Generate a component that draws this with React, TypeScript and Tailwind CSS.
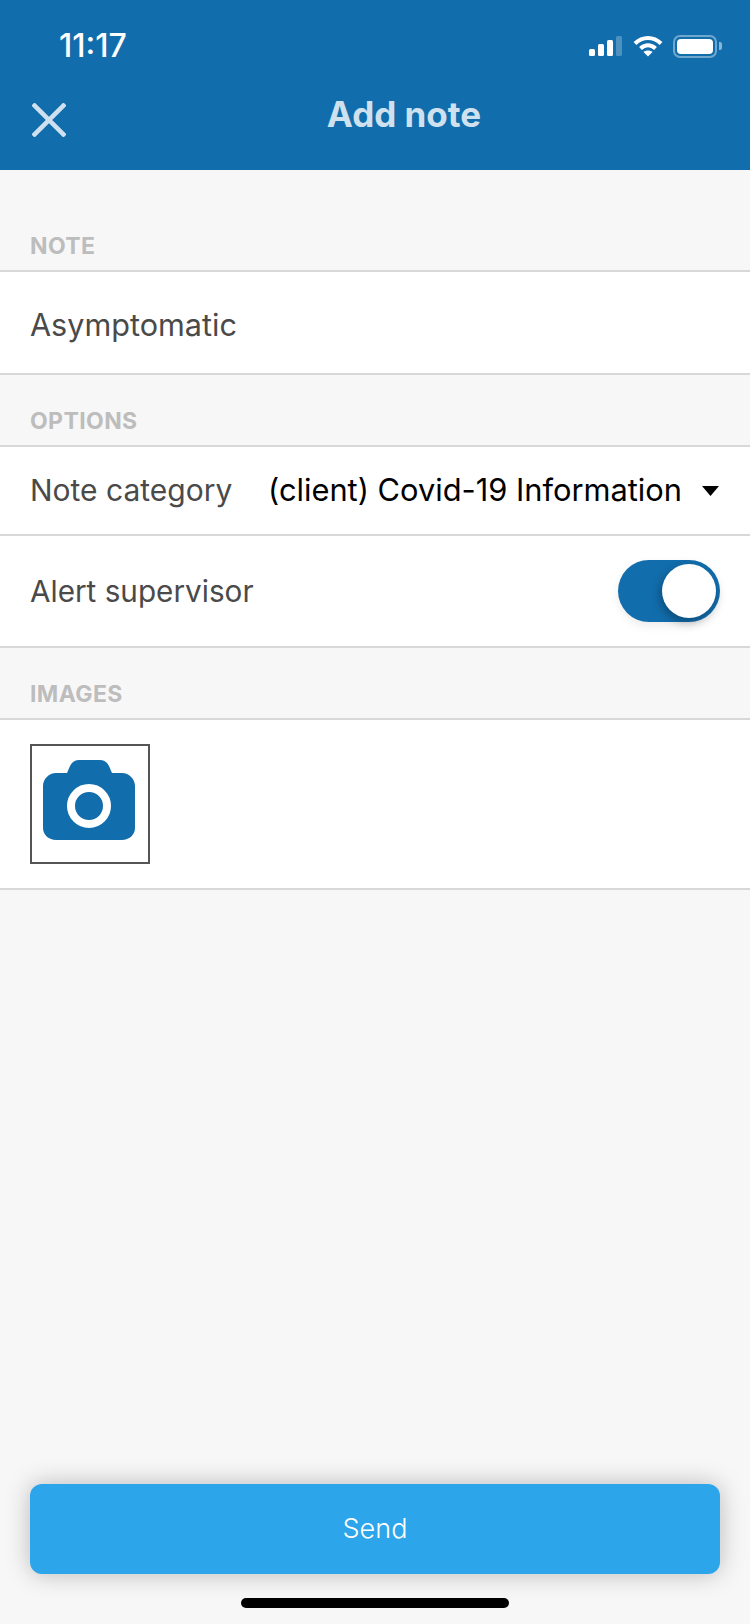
import React from 'react';

const SectionLabel = ({ title, className }: { title: string; className: string }) => (
  <div className={`flex items-end px-[30px] pb-[11px] text-[23px] leading-[26px] font-bold tracking-[0.4px] text-[#bdbdbd] ${className}`}>{title}</div>
);

const StatusIcons = () => (
  <div className="flex items-center">
    <svg width="33" height="22" viewBox="0 0 33 22" fill="#fff">
      <rect x="0" y="14" width="6" height="7" rx="1.5" />
      <rect x="9" y="9" width="6" height="12" rx="1.5" />
      <rect x="18" y="5" width="6" height="16" rx="1.5" />
      <rect x="27" y="1" width="6" height="20" rx="1.5" fillOpacity="0.25" />
    </svg>
    <svg className="ml-[11px]" width="30" height="22" viewBox="0 0 30 22" fill="none" stroke="#fff" strokeWidth="4">
      <path d="M2 8.5C9.5 1 20.5 1 28 8.5" />
      <path d="M7.5 13.5C12 9.3 18 9.3 22.5 13.5" />
      <path d="M15 21.5L10.5 17C13 15 17 15 19.5 17Z" fill="#fff" stroke="none" />
    </svg>
    <div className="ml-[10px] flex items-center">
      <div className="flex h-[23px] w-[44px] rounded-[7px] border-2 border-white/40 p-[2px]">
        <div className="flex-1 rounded-[4px] bg-white" />
      </div>
      <div className="ml-[2px] h-[8px] w-[3px] rounded-r-[2px] bg-white/50" />
    </div>
  </div>
);

const Header = () => (
  <div className="relative h-[170px] bg-[#126dac]">
    <div className="flex items-center justify-between pt-[34px] pr-[28px] pl-[59px]">
      <span className="text-[32px] leading-[24px] font-medium text-white">11:17</span>
      <StatusIcons />
    </div>
    <div className="mt-[21px] flex h-[70px] items-center justify-center pl-[58px] text-[35px] leading-[40px] font-bold text-[#cfe1ee]">Add note</div>
    <svg className="absolute top-[103px] left-[32px]" width="34" height="34" viewBox="0 0 34 34" stroke="#cfe1ee" strokeWidth="4.5" fill="none">
      <path d="M1 1L33 33M33 1L1 33" />
    </svg>
  </div>
);

const App: React.FC = () => {
  return (
    <div className="relative flex h-[1624px] w-[750px] flex-col bg-[#f7f7f7] font-['Inter',sans-serif]">
      <Header />

      <SectionLabel title="NOTE" className="h-[100px]" />
      <div className="flex h-[105px] items-center border-y-2 border-[#d8d8d8] bg-white px-[30px] pt-[5px] text-[30.6px] text-[#4a4a4a]">Asymptomatic</div>

      <SectionLabel title="OPTIONS" className="h-[70px]" />
      <div className="flex h-[91px] items-center border-y-2 border-[#d8d8d8] bg-white pr-[31px] pl-[30px] text-[30px] text-[#4a4a4a]">
        <span>Note category</span>
        <span className="ml-auto text-[30.8px] text-black">(client) Covid-19 Information</span>
        <svg className="ml-[20px]" width="17" height="10" viewBox="0 0 17 10" fill="#000">
          <path d="M0 0H17L8.5 10Z" />
        </svg>
      </div>
      <div className="flex h-[112px] items-center justify-between border-b-2 border-[#d8d8d8] bg-white pr-[30px] pl-[30px] text-[29.7px] text-[#4a4a4a]">
        <span>Alert supervisor</span>
        <div className="flex h-[62px] w-[102px] items-center justify-end rounded-full bg-[#126dac] pr-[4px] shadow-[0_4px_10px_rgba(0,0,0,0.08)]">
          <div className="h-[54px] w-[54px] rounded-full bg-white shadow-[-2px_4px_10px_rgba(0,0,0,0.3)]" />
        </div>
      </div>

      <SectionLabel title="IMAGES" className="h-[70px]" />
      <div className="h-[172px] border-y-2 border-[#d8d8d8] bg-white px-[30px] pt-[24px]">
        <div className="flex h-[120px] w-[120px] items-center justify-center border-2 border-[#555555] pr-[2px] pb-[8px]">
          <svg width="92" height="80" viewBox="0 0 92 80">
            <path
              fill="#126dac"
              d="M13 13H24L27 6C29 2 32 0 36 0H57C61 0 64 2 66 6L69 13H79C86 13 92 19 92 26V68C92 75 86 80 79 80H13C6 80 0 75 0 68V26C0 19 6 13 13 13Z"
            />
            <circle cx="46" cy="46" r="18" fill="none" stroke="#fff" strokeWidth="8" />
          </svg>
        </div>
      </div>

      <div className="mt-auto px-[30px] pb-[50px]">
        <div className="flex h-[90px] items-center justify-center rounded-[12px] bg-[#2ca5eb] text-[27px] font-light text-white shadow-[0_0_24px_rgba(0,0,0,0.25)]">Send</div>
      </div>
      <div className="absolute bottom-[16px] left-[241px] h-[10px] w-[268px] rounded-full bg-black" />
    </div>
  );
};

export default App;
